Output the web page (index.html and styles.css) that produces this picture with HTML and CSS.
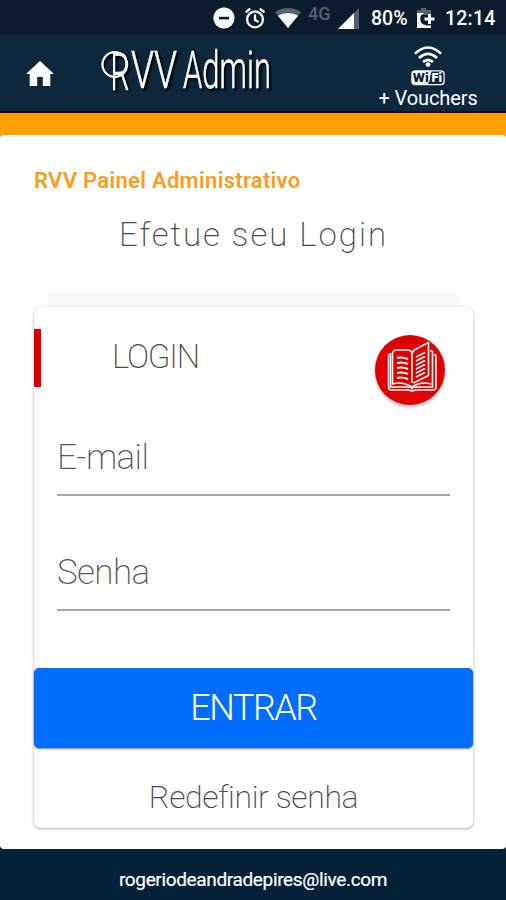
FILE: index.html
```html
<!DOCTYPE html>
<html lang="pt-BR">
<head>
    <meta charset="UTF-8">
    <meta name="viewport" content="width=device-width, initial-scale=1.0">
    <title>RVV Admin</title>
    <link rel="stylesheet" href="styles.css">
</head>
<body>
    <!-- Status bar -->
    <div class="status-bar">
        <svg class="icon-dnd" width="22" height="22" viewBox="0 0 22 22">
            <circle cx="11" cy="11" r="10.6" fill="#fff"/>
            <rect x="6" y="9.8" width="10" height="2.6" fill="#0b1d2d"/>
        </svg>
        <svg class="icon-alarm" width="22" height="22" viewBox="0 0 22 22" fill="none" stroke="#fff" stroke-width="2.3">
            <circle cx="11" cy="12.4" r="7.9"/>
            <path d="M1.6 5.4L6.2 1.6M20.4 5.4L15.8 1.6M11 7.5V13L14.5 15"/>
        </svg>
        <svg class="icon-wifi" width="26" height="20" viewBox="0 0 26 20">
            <path d="M0 4.2Q13-4 26 4.2L13 20Z" fill="#53616c"/>
            <path d="M3 7.8Q13 2.2 23 7.8L13 20Z" fill="#fff"/>
        </svg>
        <span class="network">4G</span>
        <svg class="icon-signal" width="21" height="21" viewBox="0 0 21 21">
            <path d="M21 0V21H0Z" fill="#53616c"/>
            <path d="M16 5V21H0Z" fill="#fff"/>
        </svg>
        <span class="battery">80%</span>
        <svg class="icon-battery" width="20" height="22" viewBox="0 0 20 22">
            <path d="M1 3H5V1H10V3H15V8H1Z" fill="#53616c"/>
            <path d="M1 6H8.5A6.2 6.2 0 0 0 9.5 18Q11 19 14.8 18V21H1Z" fill="#fff"/>
            <path d="M13.5 7V17M8.5 12H18.5" stroke="#fff" stroke-width="3"/>
        </svg>
        <span class="clock">12:14</span>
    </div>

    <header class="header">
        <svg class="home" width="28" height="25" viewBox="0 0 28 25">
            <path d="M14 0L28 13H24.3V25H16.8V16H11.2V25H3.7V13H0Z" fill="#fff"/>
        </svg>
        <h1 class="logo">
            <svg width="176" height="70" viewBox="0 -7 176 70">
                <!-- ring around the stem of the R -->
                <circle cx="14.8" cy="20.5" r="12.3" fill="none" stroke="#fff" stroke-width="2.2"/>
                <text x="10.5" y="46" textLength="19" lengthAdjust="spacingAndGlyphs">R</text>
                <text x="31" y="44" textLength="46" lengthAdjust="spacingAndGlyphs">VV</text>
                <text x="83" y="44" textLength="88" lengthAdjust="spacingAndGlyphs">Admin</text>
            </svg>
        </h1>
        <div class="vouchers">
            <svg width="36" height="40" viewBox="0 0 36 40">
                <g fill="none" stroke="#fff" stroke-width="2.6">
                    <path d="M5 7.6Q18-4.6 31 7.6"/>
                    <path d="M9 12Q18 3.6 27 12"/>
                    <path d="M13 16Q18 11.6 23 16"/>
                </g>
                <circle cx="18" cy="18.6" r="2.4" fill="#fff"/>
                <rect x="1.3" y="24.3" width="33.4" height="15" rx="4" fill="#fff"/>
                <path d="M21.5 25.6H30Q33.5 25.6 33.5 29V34.5Q33.5 38 30 38H17.5Q20 36 20 31Z" fill="#0c2538"/>
                <text x="2.8" y="36.3" class="wifi-dark" textLength="16" lengthAdjust="spacingAndGlyphs">Wi</text>
                <text x="21.6" y="36.3" class="wifi-light" textLength="10.5" lengthAdjust="spacingAndGlyphs">Fi</text>
            </svg>
            <span class="vouchers-label">+ Vouchers</span>
        </div>
    </header>
    <div class="accent"></div>

    <main class="content">
        <h2 class="title">RVV Painel Administrativo</h2>
        <p class="subtitle">Efetue seu Login</p>

        <div class="card-back"></div>
        <form class="card">
            <div class="card-header">
                <span class="card-title">LOGIN</span>
                <div class="badge">
                    <svg width="52" height="52" viewBox="0 0 52 52" fill="none" stroke="#fff" stroke-width="1.6" stroke-linejoin="round">
                        <path d="M4 14H2.5V46Q2.5 49 5 49H23Q26 51 29 49H47Q50 49 50 46V14H48"/>
                        <path d="M4.5 12V46H22Q26 46 26 48Q26 46 30 46H46.5V10H44"/>
                        <path d="M26 42V13Q26 9 21 9H11Q6.5 9 6.5 13V43Q16 40 26 46Q35 40 45 43"/>
                        <path d="M26 13Q27 9 30 8L42.5 1.5V34.5L27.5 42"/>
                        <path stroke-width="2" d="M11 17Q16 15.5 22 18M11 22Q16 20.5 22 23M11 27Q16 25.5 22 28M11 32Q16 30.5 22 33M11 37Q16 35.5 22 38"/>
                        <path d="M30 16L39 11.5M30 20L39 15.5M30 24L39 19.5M30 28L39 23.5M30 32L39 27.5M30 36L39 31.5"/>
                    </svg>
                </div>
            </div>
            <input class="field" type="email" placeholder="E-mail">
            <input class="field" type="password" placeholder="Senha">
            <button class="btn" type="button">ENTRAR</button>
            <a class="reset">Redefinir senha</a>
        </form>
    </main>

    <footer class="footer">rogeriodeandradepires@live.com</footer>
</body>
</html>
```

FILE: styles.css
```css
* {
    margin: 0;
    padding: 0;
    box-sizing: border-box;
}

body {
    font-family: Roboto, "Liberation Sans", sans-serif;
    background: #04223a;
    height: 900px;
    overflow: hidden;
    display: flex;
    flex-direction: column;
}

svg {
    display: block;
    flex: none;
}

.status-bar {
    height: 34px;
    flex: none;
    background: #0b1d2d;
    color: white;
    display: flex;
    align-items: center;
    padding: 2px 0 0 213px;
    font-size: 19.5px;
    font-weight: 500;
    letter-spacing: 0.2px;
}

.icon-alarm {
    margin-left: 9px;
}

.icon-wifi {
    margin-left: 9px;
}

.network {
    width: 24px;
    margin: -10px 0 0 7px;
    color: #53616c;
    font-size: 18px;
    letter-spacing: 0;
}

.icon-signal {
    margin-left: 6px;
}

.battery {
    width: 37px;
    margin-left: 12px;
    white-space: nowrap;
    letter-spacing: 0;
}

.icon-battery {
    margin-left: 8px;
}

.clock {
    margin-left: 9px;
}

.header {
    height: 79px;
    flex: none;
    background: #0c283e;
    border-bottom: 2px solid #160d1c;
    color: white;
    display: flex;
    align-items: flex-start;
}

.home {
    margin: 27px 0 0 26px;
}

.logo {
    margin: 3px 0 0 46px;
    font-weight: 300;
    font-size: 51px;
    filter: drop-shadow(2px 2px 1px #000);
}

.logo text {
    fill: white;
    stroke: white;
    stroke-width: 0.6px;
}

.vouchers {
    width: 110px;
    margin: 12px 0 0 97px;
    display: flex;
    flex-direction: column;
    align-items: center;
}

.wifi-dark,
.wifi-light {
    font-size: 13.5px;
    font-weight: 900;
    fill: #0c2538;
}

.wifi-light {
    fill: white;
}

.vouchers-label {
    font-size: 20px;
    line-height: 25px;
    letter-spacing: -0.1px;
    white-space: nowrap;
}

.accent {
    height: 26px;
    flex: none;
    background: #ffa200;
}

.content {
    height: 714px;
    flex: none;
    margin-top: -4px;
    background: white;
    border-radius: 4px;
    padding: 32px 33px 0 34px;
}

.title {
    color: #fb9d1c;
    font-size: 22px;
    font-weight: 600;
    line-height: 28px;
    letter-spacing: 0.3px;
}

.subtitle {
    margin-top: 20px;
    color: #4a4a4a;
    font-size: 33px;
    font-weight: 200;
    line-height: 40px;
    letter-spacing: 2px;
    text-align: center;
}

.card-back {
    height: 14px;
    margin: 38px 13px 0 14px;
    background: #f9f9f9;
    border-radius: 6px 6px 0 0;
    box-shadow: 0 0 2px #e8e8e8;
}

.card {
    height: 521px;
    background: white;
    border-radius: 7px;
    box-shadow: 0 1px 3px rgba(0, 0, 0, 0.35);
    display: flex;
    flex-direction: column;
    position: relative;
}

.card-header {
    height: 58px;
    flex: none;
    margin-top: 22px;
    border-left: 7px solid #df0000;
    display: flex;
    justify-content: space-between;
    padding: 0 28px 0 71px;
}

.card-title {
    color: #4a4a4a;
    font-size: 33px;
    font-weight: 200;
    line-height: 56px;
    letter-spacing: -1.2px;
}

.badge {
    width: 70px;
    height: 70px;
    margin-top: 6px;
    background: #e00000;
    border-radius: 50%;
    box-shadow: 0 2px 3px rgba(0, 0, 0, 0.3);
    padding: 6px 0 0 11px;
}

.field {
    height: 77px;
    flex: none;
    margin: 32px 23px 0;
    padding-top: 2px;
    border: none;
    border-bottom: 2px solid #a6a6a6;
    border-radius: 0;
    background: none;
    outline: none;
    font-family: inherit;
    font-size: 35px;
    font-weight: 200;
    letter-spacing: -0.6px;
}

.field + .field {
    margin-top: 38px;
}

.field::placeholder {
    color: #555;
    opacity: 1;
}

.btn {
    height: 80px;
    flex: none;
    margin-top: 57px;
    border: none;
    border-radius: 5px;
    background: #006dff;
    box-shadow: 0 1px 2px rgba(0, 0, 0, 0.5);
    color: white;
    font-family: inherit;
    font-size: 36px;
    font-weight: 300;
    letter-spacing: -1.5px;
}

.reset {
    margin-top: 29px;
    color: #4a4a4a;
    font-size: 32px;
    font-weight: 200;
    line-height: 40px;
    letter-spacing: -0.4px;
    text-align: center;
}

.footer {
    flex: 1;
    color: white;
    font-size: 19px;
    line-height: 62px;
    letter-spacing: -0.35px;
    -webkit-text-stroke: 0.2px white;
    text-align: center;
}
```
